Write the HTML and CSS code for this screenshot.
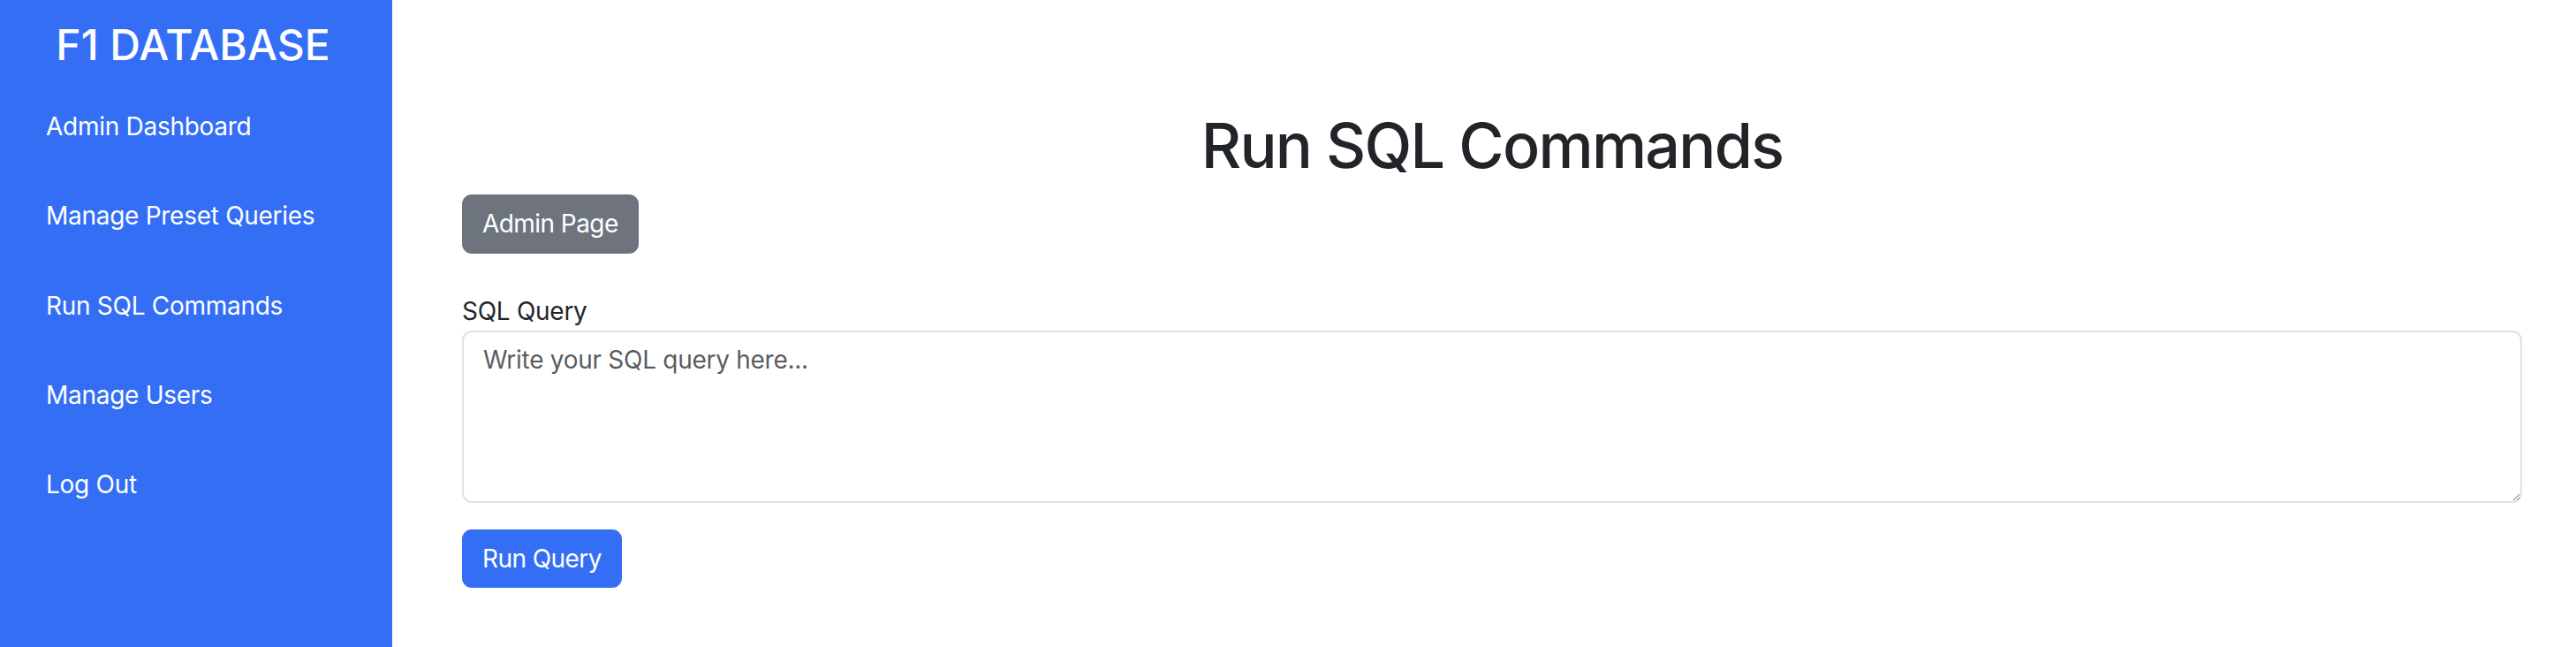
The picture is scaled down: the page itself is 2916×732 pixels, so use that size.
FILE: index.html
```html
<!DOCTYPE html>
<html lang="en">
<head>
<meta charset="utf-8">
<title>Run SQL Commands</title>
<link rel="stylesheet" href="styles.css">
</head>
<body>
<div class="layout">
  <aside class="sidebar">
    <h3 class="brand">F1 DATABASE</h3>
    <nav class="nav">
      <a class="nav-link" href="#">Admin Dashboard</a>
      <a class="nav-link" href="#">Manage Preset Queries</a>
      <a class="nav-link" href="#">Run SQL Commands</a>
      <a class="nav-link" href="#">Manage Users</a>
      <a class="nav-link" href="#">Log Out</a>
    </nav>
  </aside>
  <main class="main">
    <h1 class="page-title">Run SQL Commands</h1>
    <a class="btn btn-secondary" href="#">Admin Page</a>
    <form class="query-form">
      <label class="form-label" for="sql">SQL Query</label>
      <textarea class="form-control" id="sql" placeholder="Write your SQL query here..."></textarea>
      <button class="btn btn-primary" type="button">Run Query</button>
    </form>
  </main>
</div>
</body>
</html>
```

FILE: styles.css
```css
* { box-sizing: border-box; }
html, body { margin: 0; padding: 0; }
body {
  font-family: Inter, "Noto Sans", "Liberation Sans", sans-serif;
  font-size: 28px;
  letter-spacing: -0.01em;
  line-height: 42.75px;
  color: #212529;
  background: #fff;
}
.layout {
  display: flex;
  min-height: 100vh;
}
.sidebar {
  width: 444px;
  flex: 0 0 444px;
  background: #346ef5;
  color: #fff;
  padding: 21px 0 0 22px;
}
.brand {
  margin: 0 0 27px;
  font-size: 48px;
  font-weight: 500;
  letter-spacing: 0;
  line-height: 59px;
  text-align: center;
  padding-right: 29px;
}
.nav {
  display: flex;
  flex-direction: column;
  gap: 28.5px;
}
.nav-link {
  display: block;
  color: #fff;
  text-decoration: none;
  padding: 15px 30px;
}
.main {
  flex: 1;
  padding: 121px 61px 0 79px;
}
.page-title {
  margin: 0 0 11px;
  font-size: 70px;
  font-weight: 500;
  letter-spacing: -0.025em;
  line-height: 88px;
  text-align: center;
}
.btn {
  display: inline-block;
  font-family: inherit;
  font-size: 28px;
  letter-spacing: -0.02em;
  line-height: 42.75px;
  padding: 10px 21px;
  border: 2px solid transparent;
  border-radius: 11px;
  color: #fff;
  text-decoration: none;
  cursor: pointer;
}
.btn-secondary {
  background: #6e747d;
  border-color: #6e747d;
}
.btn-primary {
  background: #346ef5;
  border-color: #346ef5;
}
.query-form {
  margin-top: 44px;
}
.form-label {
  display: block;
}
.form-control {
  display: block;
  width: 100%;
  height: 195px;
  margin: 0 0 30px;
  padding: 10px 22px;
  font-family: inherit;
  font-size: 28px;
  letter-spacing: -0.01em;
  line-height: 42.75px;
  color: #212529;
  border: 2px solid #dee2e6;
  border-radius: 11px;
  background: #fff;
}
.form-control::placeholder {
  color: rgba(33, 37, 41, 0.75);
}
```
